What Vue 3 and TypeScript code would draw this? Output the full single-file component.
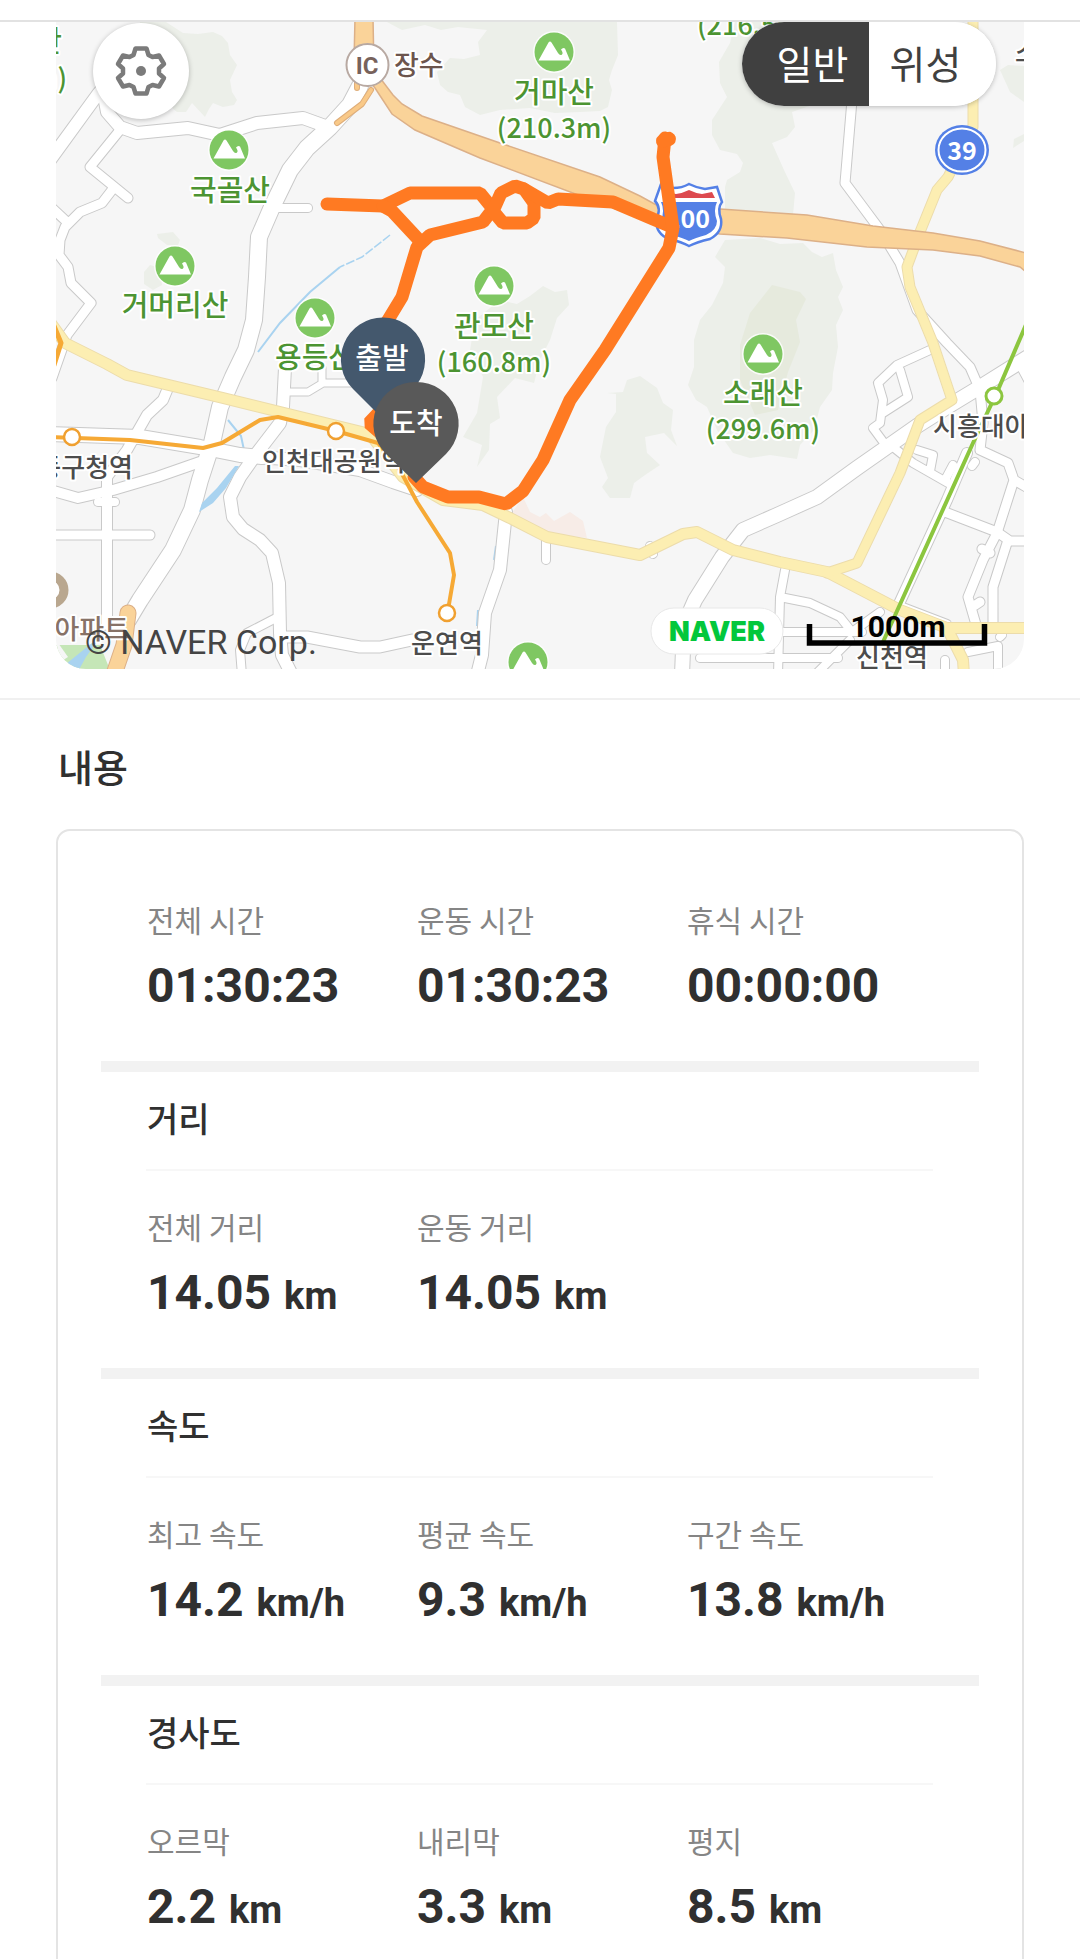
<script setup lang="ts">
import { ref } from 'vue'

type MapMode = 'normal' | 'satellite'

interface Metric {
  label: string
  value: string
  unit?: string
}

interface MetricGroup {
  title?: string
  metrics: Metric[]
}

interface Road {
  d: string
  w: number
}

interface MapLabel {
  x: number
  y: number
  text: string
  kind: 'peak' | 'height' | 'station' | 'place'
  anchor?: 'start' | 'middle' | 'end'
}

const mode = ref<MapMode>('normal')

const groups: MetricGroup[] = [
  {
    metrics: [
      { label: '전체 시간', value: '01:30:23' },
      { label: '운동 시간', value: '01:30:23' },
      { label: '휴식 시간', value: '00:00:00' },
    ],
  },
  {
    title: '거리',
    metrics: [
      { label: '전체 거리', value: '14.05', unit: 'km' },
      { label: '운동 거리', value: '14.05', unit: 'km' },
    ],
  },
  {
    title: '속도',
    metrics: [
      { label: '최고 속도', value: '14.2', unit: 'km/h' },
      { label: '평균 속도', value: '9.3', unit: 'km/h' },
      { label: '구간 속도', value: '13.8', unit: 'km/h' },
    ],
  },
  {
    title: '경사도',
    metrics: [
      { label: '오르막', value: '2.2', unit: 'km' },
      { label: '내리막', value: '3.3', unit: 'km' },
      { label: '평지', value: '8.5', unit: 'km' },
    ],
  },
]

const forests: string[] = [
  'M140 22L166 22L183 33L198 34L213 32L222 36L228 43L230 55L237 65L230 80L232 92L237 100L234 105L223 107L213 103L209 109L205 117L192 103L186 112L177 112L140 80Z',
  'M387 22L402 30L425 25L441 30L458 27L487 30L478 42L480 55L464 59L450 58L437 72L440 85L448 92L460 95L465 107L480 115L500 110L530 108L555 113L580 112L600 111L608 107L612 90L609 80L612 70L618 55L617 22Z',
  'M735 22L730 43L719 62L720 83L727 97L712 120L712 135L720 150L737 154L743 163L740 172L727 180L725 187L725 215L793 215L795 193L784 170L772 143L787 137L795 127L792 112L815 104L830 90L820 22Z',
  'M725 240L715 257L725 267L723 283L712 305L700 320L694 340L694 367L688 385L696 400L707 407L717 430L733 453L750 458L770 455L797 459L800 445L814 430L820 407L832 390L833 373L838 347L836 325L843 310L838 297L843 287L836 270L833 253L822 257L812 252L803 243L780 244L760 238Z',
  'M500 300L517 304L530 296L543 286L555 292L567 290L569 305L557 318L550 340L540 360L534 383L515 378L497 397L500 418L490 424L489 450L477 467L482 445L463 437L477 413L483 377L470 350L475 320Z',
  'M607 393L623 392L627 380L640 376L657 388L663 403L673 410L671 430L677 446L664 433L645 437L647 453L660 465L645 475L634 483L630 498L610 498L602 487L608 478L600 457L606 427L616 412L616 394Z',
  'M157 234L173 232L180 240L178 245L167 245L158 238Z',
  'M150 265L160 268L162 285L153 290L144 284L144 272Z',
  'M1000 70L1008 65L1024 66L1024 102L1010 92Z',
  'M1013 148L1014 139L1024 134L1024 141Z',
]

const whiteRoads: Road[] = [
  { d: 'M50 160L98 94L110 80', w: 12 },
  { d: 'M104 96L107 112L120 127L137 133L188 128L220 135L257 123L303 118L328 127', w: 12 },
  { d: 'M120 130L90 167L128 198M112 190L102 203L80 212L65 227L60 240L59 255L68 267L71 283L91 303L67 335L52 378M52 208L66 221', w: 9 },
  { d: 'M360 86L350 105L330 127L307 148L290 170L272 207L259 237L257 277L254 320L246 350L233 377L220 407L212 443L200 480L192 510L173 550L140 600L128 620', w: 16 },
  { d: 'M276 208L308 208', w: 8 },
  { d: 'M168 388L163 400L147 415L127 450L107 477L107 625', w: 10 },
  { d: 'M50 434L140 437L200 447L240 455L262 457', w: 14 },
  { d: 'M50 490L78 498L113 490L157 477L200 462', w: 10 },
  { d: 'M50 535L150 535', w: 9 },
  { d: 'M98 502L115 502', w: 8 },
  { d: 'M285 368L283 407L280 423L257 453L240 477L230 497L233 517L243 529L260 540L272 553L279 583L280 633L282 655L292 675', w: 12 },
  { d: 'M285 392L308 392L323 383L360 383M322 383L322 368', w: 7 },
  { d: 'M280 637L307 637L360 647L380 647L412 640', w: 11 },
  { d: 'M276 618L247 633L240 650L242 675', w: 8 },
  { d: 'M257 457L300 460L360 470L393 482L417 490', w: 12 },
  { d: 'M506 512L500 570L485 613L482 655L477 675', w: 12 },
  { d: 'M546 540L546 560M650 546L653 554', w: 8 },
  { d: 'M682 675L684 625L695 600L722 557L743 530L777 515L817 497L857 468L887 447L917 426L947 407L980 387L1028 357', w: 14 },
  { d: 'M852 100L845 183L880 230L900 263L917 310L947 343L970 367L980 390L983 423L980 450L1008 463L1014 480L1028 488', w: 9 },
  { d: 'M930 350L897 365L878 383L883 400L880 423L873 428L887 447M900 370L908 397L883 413', w: 8 },
  { d: 'M893 447L913 463L948 483M917 450L933 455L930 471M945 480L953 465M1020 365L1028 380M975 462L972 466', w: 8 },
  { d: 'M967 453L947 500L898 606', w: 10 },
  { d: 'M945 512L997 532L1010 541L1028 541', w: 9 },
  { d: 'M1013 483L997 533L983 560L968 597L977 628M1007 543L993 587L993 625M980 602L974 606M982 549L990 553', w: 9 },
  { d: 'M785 570L780 597L778 675M780 597L810 603L840 617L852 632M775 632L862 632M700 658L838 658M850 640L815 675M852 632L880 612M900 606L947 624', w: 8 },
  { d: 'M968 652L998 646L998 675M945 660L945 675M1000 637L1002 635', w: 8 },
]

const yellowRoads: Road[] = [
  { d: 'M50 322L65 343L107 364L127 375L223 398L280 412L370 434L403 477L443 500L483 505L510 518L547 537L640 555L683 534L697 532L733 550L780 562L827 572L900 610L947 628L1028 628', w: 10 },
  { d: 'M973 18L973 127L948 177L937 190L920 232L907 267L910 287L933 343L952 400L920 420L900 473L857 563L827 573', w: 9 },
  { d: 'M947 628L963 660L964 675', w: 10 },
]

const peaks: [number, number][] = [
  [229, 150],
  [175, 266],
  [315, 318],
  [554, 52],
  [494, 286],
  [763, 354],
  [528, 662],
]

const labels: MapLabel[] = [
  { x: 230, y: 201, text: '국골산', kind: 'peak' },
  { x: 175, y: 316, text: '거머리산', kind: 'peak' },
  { x: 315, y: 368, text: '용등산', kind: 'peak' },
  { x: 554, y: 103, text: '거마산', kind: 'peak' },
  { x: 554, y: 138, text: '(210.3m)', kind: 'height' },
  { x: 494, y: 337, text: '관모산', kind: 'peak' },
  { x: 494, y: 372, text: '(160.8m)', kind: 'height' },
  { x: 763, y: 404, text: '소래산', kind: 'peak' },
  { x: 763, y: 439, text: '(299.6m)', kind: 'height' },
  { x: 697, y: 35, text: '(216.5m)', kind: 'height', anchor: 'start' },
  { x: 62, y: 52, text: '산', kind: 'peak', anchor: 'end' },
  { x: 67, y: 88, text: 'm)', kind: 'height', anchor: 'end' },
  { x: 133, y: 477, text: '남동구청역', kind: 'station', anchor: 'end' },
  { x: 262, y: 471, text: '인천대공원역', kind: 'station', anchor: 'start' },
  { x: 447, y: 653, text: '운연역', kind: 'station' },
  { x: 933, y: 436, text: '시흥대야', kind: 'station', anchor: 'start' },
  { x: 892, y: 667, text: '신천역', kind: 'station' },
  { x: 1015, y: 62, text: '소', kind: 'station', anchor: 'start' },
  { x: 129, y: 639, text: '아파트', kind: 'place', anchor: 'end' },
]
</script>

<template>
  <main class="page">
    <div class="topbar"></div>

    <section class="map-section">
      <div class="map">
        <svg class="map-canvas" viewBox="56 22 968 647" role="img" aria-label="운동 경로 지도">
          <rect x="56" y="22" width="968" height="647" fill="#f6f6f6" />

          <path v-for="d in forests" :key="d" :d="d" fill="#ecefe9" />
          <path d="M740 345L750 313L772 285L800 292L806 299L796 320L800 342L788 372L778 410L755 415L740 380Z" fill="#e6eadd" />
          <path d="M523 497L530 512L540 517L546 513L554 521L570 512L583 521L587 538L547 533L512 513Z" fill="#f7ece7" />

          <path d="M228 420L241 436L244 450" class="river" stroke-width="2" />
          <path d="M390 235L362 257L340 267" class="river" stroke-width="1.5" stroke-dasharray="9 2" />
          <path d="M340 267L310 292L280 323L258 352" class="river" stroke-width="2" />
          <path d="M496 546L494 560M478 610L477 626M847 645L832 658" class="river" stroke-width="2" />

          <path v-for="r in whiteRoads" :key="'wc' + r.d" :d="r.d" :stroke-width="r.w + 2" class="line" stroke="#c9c9c9" />
          <path v-for="r in whiteRoads" :key="'w' + r.d" :d="r.d" :stroke-width="r.w" class="line" stroke="#fff" />
          <path d="M235 466L239 466L226 488L213 503L199 512L202 503L217 488Z" fill="#a9d3f0" />

          <path d="M56 645L100 645L112 675L56 675Z" fill="#c5e6b7" />
          <path d="M56 640L68 657L60 662Z" fill="#f6f6f6" />
          <path d="M66 664L92 643L98 640L86 657L76 675L66 672Z" fill="#a9d3f0" />

          <path v-for="r in yellowRoads" :key="'yc' + r.d" :d="r.d" :stroke-width="r.w + 2" class="line" stroke="#ecdcab" />
          <path v-for="r in yellowRoads" :key="'y' + r.d" :d="r.d" :stroke-width="r.w" class="line" stroke="#fceeb2" />

          <!-- expressway -->
          <path d="M371 90L362 104L337 123M357 78L357 88" class="line" stroke="#dfae7a" stroke-width="6" />
          <path d="M371 90L362 104L337 123M357 78L357 88" class="line" stroke="#f9c988" stroke-width="4" />
          <path
            d="M355 18L373 18L374 70L393 95L402 104L422 116L500 143L600 177L640 196L660 207L720 209L807 215L873 226L933 233L980 241L1030 254L1030 275L1020 267L980 256L933 250L867 247L787 238L720 234L660 224L610 207L480 158L415 130L392 114L375 88L354 62Z"
            fill="#fad399"
            stroke="#dcb088"
            stroke-width="1.5"
          />
          <path d="M128 613L124 645L112 680" class="line" stroke="#dcb088" stroke-width="17" />
          <path d="M128 613L124 645L112 680" class="line" stroke="#fad399" stroke-width="15" />

          <!-- subway lines -->
          <path d="M52 437L130 440L203 448L222 443L260 420L278 417L336 431L378 443L400 470L417 502L450 553L454 575L448 610" class="line" stroke="#f6a935" stroke-width="4" />
          <path d="M54 326L61 343L54 365" class="line" stroke="#f6a935" stroke-width="5" />
          <path d="M1028 320L998 390L973 443L883 642" class="line" stroke="#8cc63f" stroke-width="4" />
          <g fill="#fff" stroke="#f0a030" stroke-width="2.5">
            <circle cx="72" cy="437" r="8" />
            <circle cx="336" cy="431" r="8" />
            <circle cx="447" cy="613" r="8" />
            <circle cx="994" cy="396" r="8" stroke="#8cc63f" stroke-width="3" />
          </g>
          <circle cx="50" cy="590" r="14" fill="#fff" stroke="#b9a78f" stroke-width="9" />

          <g v-for="[x, y] in peaks" :key="`${x}-${y}`" :transform="`translate(${x} ${y})`">
            <circle r="21" fill="#fff" opacity="0.8" />
            <circle r="19.5" fill="#7fc762" />
            <path d="M-15.5 8.5L-5.5 -9.5Q-4 -11.5 -2.5 -9.500L4 1Q6 4 8 2.5Q9.5 1 7 -2.5Q9 -5 11 -3.5L16 8.5Z" fill="#fff" />
          </g>

          <text
            v-for="l in labels"
            :key="l.text + l.x"
            :x="l.x"
            :y="l.y"
            :text-anchor="l.anchor ?? 'middle'"
            :class="['label', l.kind]"
          >{{ l.text }}</text>

          <!-- interchange and route shields -->
          <circle cx="367.5" cy="65" r="21" fill="#fff" stroke="#b8a9a2" stroke-width="2" />
          <text x="367" y="74" text-anchor="middle" class="ic">IC</text>
          <text x="394" y="75" class="label ic-name">장수</text>

          <path
            d="M661 184L673 188Q682 188 689 184Q697 188 705 189L717 187L722 202Q717 208 721 219Q723 232 710 239Q697 242 689 246Q682 242 669 239Q656 234 656 220Q662 208 655 201Z"
            fill="#fff"
            stroke="#5480e6"
            stroke-width="2.5"
          />
          <path d="M663 198L666 192L676 194Q683 193 689 190Q695 193 702 194L712 192L715 198Z" fill="#dd4a4f" />
          <path d="M661 202L717 202Q713 210 717 221Q717 230 706 235Q695 238 689 241Q683 238 672 235Q661 230 661 221Q665 210 661 202Z" fill="#5480e6" />
          <text x="688" y="228" text-anchor="middle" class="route-no">100</text>

          <ellipse cx="962" cy="150" rx="27" ry="25" fill="#5480e6" />
          <ellipse cx="962" cy="150" rx="23.5" ry="21.5" fill="none" stroke="#fff" stroke-width="2" />
          <text x="962" y="160" text-anchor="middle" class="route-no">39</text>

          <!-- workout track -->
          <g class="track">
            <path d="M327 204L383 206L410 193L480 193L493 209L483 222L430 235L417 247L402 297L385 325L385 406L369 423L384 436" />
            <path d="M383 206L392 211L419 240" />
            <path d="M493 211L501 193L515 186L524 189L534 203L534 218L527 223L503 223Z" />
            <path d="M524 189L548 203L558 199L613 202L653 219L672 227" />
            <path d="M665 138L663 157L673 228L669 248L605 350L570 400L543 460L523 491L506 504L479 497L448 497L423 487L414 477" />
            <path d="M663 141L667 138L669 139" stroke-width="14" />
          </g>

          <!-- start and finish pins -->
          <path d="M383 317.5A42 42 0 0 1 413 389L383 419L353 389A42 42 0 0 1 383 317.5Z" fill="#44586d" />
          <text x="382" y="369" text-anchor="middle" class="pin">출발</text>
          <path d="M416 382A42 42 0 0 1 446 454L416 483L386 454A42 42 0 0 1 416 382Z" fill="#595959" />
          <text x="416" y="434" text-anchor="middle" class="pin">도착</text>

          <text x="85" y="654" class="copyright">© NAVER Corp.</text>

          <rect x="651" y="608" width="132" height="46" rx="23" fill="#fff" stroke="#e8e8e8" />
          <text x="717" y="641" text-anchor="middle" class="naver">NAVER</text>

          <path d="M809.5 624L809.5 643L984.5 643L984.5 624" fill="none" stroke="#000" stroke-width="5.5" />
          <text x="898" y="637" text-anchor="middle" class="scale">1000m</text>
        </svg>

        <button class="settings" type="button" aria-label="지도 설정">
          <svg viewBox="-27 -27 54 54" aria-hidden="true">
            <path
              d="M-5.5 -22.5L5.5 -22.5L7.5 -16L11.5 -14L18 -15.5L23 -7L18 -2.5L18 2.5L23 7L18 15.5L11.5 14L7.5 16L5.5 22.5L-5.5 22.5L-7.5 16L-11.5 14L-18 15.5L-23 7L-18 2.5L-18 -2.5L-23 -7L-18 -15.5L-11.5 -14L-7.5 -16Z"
              fill="none"
              stroke="#7b7b7b"
              stroke-width="4.5"
              stroke-linejoin="round"
            />
            <circle r="5" fill="#7b7b7b" />
          </svg>
        </button>

        <div class="mode" role="group" aria-label="지도 종류">
          <button type="button" :class="{ on: mode === 'normal' }" :aria-pressed="mode === 'normal'" @click="mode = 'normal'">일반</button>
          <button type="button" :class="{ on: mode === 'satellite' }" :aria-pressed="mode === 'satellite'" @click="mode = 'satellite'">위성</button>
        </div>
      </div>
    </section>

    <section class="content">
      <h2 class="content-title">내용</h2>
      <div class="card">
        <section v-for="(g, i) in groups" :key="i" class="group">
          <h3 v-if="g.title" class="group-title">{{ g.title }}</h3>
          <dl class="metrics">
            <div v-for="m in g.metrics" :key="m.label">
              <dt>{{ m.label }}</dt>
              <dd>{{ m.value }}<span v-if="m.unit" class="unit">{{ m.unit }}</span></dd>
            </div>
          </dl>
        </section>
      </div>
    </section>
  </main>
</template>

<style>
body {
  margin: 0;
  background: #fff;
}
</style>

<style scoped>
.page {
  height: 100vh;
  overflow: hidden;
  background: #fff;
  color: #303030;
  font-family: 'Noto Sans CJK KR', 'Noto Sans', sans-serif;
}

.topbar {
  height: 20px;
  border-bottom: 2px solid #e2e2e2;
}

.map-section {
  padding: 0 56px 29px;
  border-bottom: 2px solid #f0f0f0;
}

.map {
  position: relative;
  overflow: hidden;
  border-radius: 0 0 30px 30px;
}

.map-canvas {
  display: block;
  width: 100%;
  height: auto;
}

.line {
  fill: none;
  stroke-linecap: round;
  stroke-linejoin: round;
}

.river {
  fill: none;
  stroke: #a9d3f0;
}

.track {
  fill: none;
  stroke: #ff7a22;
  stroke-width: 13px;
  stroke-linecap: round;
  stroke-linejoin: bevel;
}

.label {
  font-weight: 500;
  paint-order: stroke;
  stroke: #fff;
  stroke-width: 4px;
  stroke-linejoin: round;
}

.peak {
  font-size: 29px;
  fill: #4c9432;
}

.height {
  font-size: 27px;
  fill: #4c9432;
}

.station {
  font-size: 26px;
  fill: #4c4c4c;
}

.place {
  font-size: 27px;
  fill: #877267;
}

.ic {
  font: 700 24px Roboto, sans-serif;
  fill: #77625b;
}

.ic-name {
  font-size: 27px;
  fill: #6c554d;
}

.route-no {
  font-size: 25px;
  font-weight: 700;
  fill: #fff;
}

.pin {
  font-size: 29px;
  font-weight: 500;
  fill: #fff;
}

.copyright {
  font: 400 34px Roboto, sans-serif;
  fill: #444;
}

.naver {
  font: 900 27px Inter, sans-serif;
  fill: #03c73c;
}

.scale {
  font: 700 30px Roboto, sans-serif;
  fill: #000;
}

.settings {
  position: absolute;
  top: 1px;
  left: 37px;
  display: flex;
  align-items: center;
  justify-content: center;
  width: 96px;
  height: 96px;
  padding: 0;
  border: 0;
  border-radius: 50%;
  background: #fff;
  box-shadow: 0 1px 5px rgba(0, 0, 0, 0.25);
}

.settings svg {
  width: 54px;
  height: 54px;
}

.mode {
  position: absolute;
  top: 0;
  right: 28px;
  display: flex;
  overflow: hidden;
  border-radius: 42px;
  background: #fff;
  box-shadow: 0 1px 5px rgba(0, 0, 0, 0.25);
}

.mode button {
  width: 127px;
  height: 84px;
  border: 0;
  padding: 0 20px 4px 34px;
  background: #fff;
  color: #404040;
  font: 400 39px/80px 'Noto Sans CJK KR', sans-serif;
  white-space: nowrap;
}

.mode button:last-child {
  padding: 0 34px 4px 20px;
}

.mode button.on {
  background: #404040;
  color: #fff;
}

.content {
  padding: 42px 56px 56px;
}

.content-title {
  margin: 0 0 39px;
  padding-left: 2px;
  font-size: 38px;
  line-height: 48px;
  font-weight: 500;
}

.card {
  padding: 68px 43px 0;
  border: 2px solid #e4e4e4;
  border-radius: 14px;
}

.group + .group {
  border-top: 11px solid #f2f2f2;
}

.group-title {
  margin: 0 46px 35px 45px;
  padding: 22px 0 27px 1px;
  border-bottom: 2px solid #f7f7f7;
  font-size: 34px;
  line-height: 48px;
  font-weight: 500;
}

.metrics {
  display: grid;
  grid-template-columns: repeat(3, 1fr);
  margin: 0;
  padding: 0 22px 45px 46px;
}

.metrics dt {
  margin-bottom: 17px;
  color: #858585;
  font-size: 30px;
  line-height: 40px;
}

.metrics dd {
  margin: 0;
  font: 700 48px/60px Roboto, sans-serif;
  white-space: nowrap;
}

.unit {
  margin-left: 13px;
  font-size: 38px;
  line-height: 1;
}
</style>
